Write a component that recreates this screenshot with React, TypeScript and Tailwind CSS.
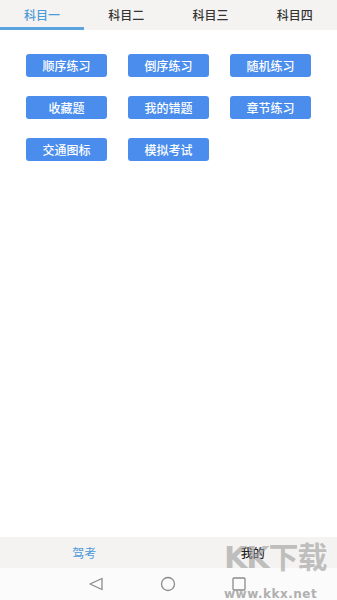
import { useState } from "react";

const SUBJECTS = ["科目一", "科目二", "科目三", "科目四"];

const ACTIONS = ["顺序练习", "倒序练习", "随机练习", "收藏题", "我的错题", "章节练习", "交通图标", "模拟考试"];

const font = { fontFamily: '"Noto Sans CJK SC", "Noto Sans", sans-serif' };

export default function App() {
	const [active, setActive] = useState(0);

	return (
		<div className="relative flex h-[600px] w-[337px] flex-col overflow-hidden bg-white" style={font}>
			{/* subject tabs */}
			<div className="grid h-[30px] grid-cols-4 bg-[#f5f3f2]">
				{SUBJECTS.map((name, i) => (
					<button
						key={name}
						onClick={() => setActive(i)}
						className={
							i === active
								? "flex items-center justify-center border-b-[3px] border-[#5aa3de] pt-[2px] text-[12px] font-medium text-[#4d9ad8]"
								: "flex items-center justify-center border-b-[3px] border-transparent pt-[2px] text-[12px] font-medium text-[#333]"
						}
					>
						{name}
					</button>
				))}
			</div>

			<div className="grid grid-cols-[81px_81px_81px] gap-x-[21px] gap-y-[19px] pl-[26px] pt-[24px]">
				{ACTIONS.map((label) => (
					<button
						key={label}
						className="flex h-[23px] items-center justify-center rounded-[3px] bg-[#4a8ded] text-[12px] font-medium text-white"
					>
						{label}
					</button>
				))}
			</div>

			<div className="flex-1" />

			{/* bottom tabs */}
			<div className="grid h-[31px] grid-cols-2 bg-[#f5f3f2] text-[12px]">
				<div className="flex items-center justify-center text-[#4d9ad8]">驾考</div>
				<div className="flex items-center justify-center font-medium text-[#222]">我的</div>
			</div>

			{/* system nav */}
			<div className="flex h-[32px] items-center justify-center gap-[56px] bg-[#fbfbfb] pr-[1px]">
				<svg width="16" height="14" viewBox="0 0 16 14" className="ml-[-2px]">
					<path d="M14 1.5 L2 7 L14 12.5 Z" fill="none" stroke="#8a8a8a" strokeWidth="1.3" strokeLinejoin="round" />
				</svg>
				<svg width="16" height="16" viewBox="0 0 16 16">
					<circle cx="8" cy="8" r="6.5" fill="none" stroke="#8a8a8a" strokeWidth="1.3" />
				</svg>
				<svg width="14" height="14" viewBox="0 0 14 14">
					<rect x="1" y="1" width="12" height="12" rx="1" fill="none" stroke="#8a8a8a" strokeWidth="1.3" />
				</svg>
			</div>

			{/* watermark */}
			<div className="pointer-events-none absolute left-[224px] top-[540px] flex flex-col items-start whitespace-nowrap">
				<span
					className="text-[30px] font-bold leading-[36px] tracking-[-1px] text-[#9a9a9a]/60"
					style={{ fontFamily: '"DejaVu Sans", "Noto Sans CJK SC", sans-serif' }}
				>
					KK下载
				</span>
				<span
					className="mt-[12px] text-[12px] font-bold leading-[12px] tracking-[0.5px] text-[#b0b0b0]"
					style={{ fontFamily: '"DejaVu Sans", sans-serif' }}
				>
					www.kkx.net
				</span>
			</div>
		</div>
	);
}
